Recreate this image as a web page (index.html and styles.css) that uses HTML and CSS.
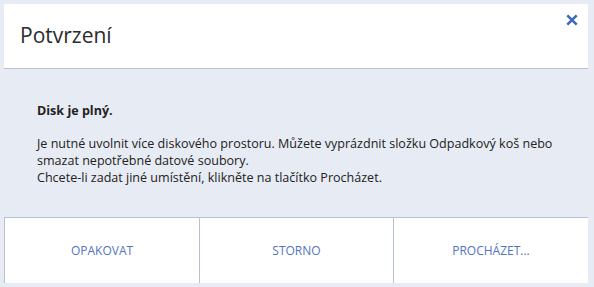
FILE: index.html
```html
<!DOCTYPE html>
<html lang="cs">
<head>
<meta charset="utf-8">
<link rel="stylesheet" href="styles.css">
</head>
<body>
<div class="dialog">
  <header class="head">
    <h1 class="title">Potvrzení</h1>
    <button class="close" aria-label="Zavřít">
      <svg width="12" height="12" viewBox="0 0 12 12"><path d="M1.3 1.3 L10.7 10.7 M10.7 1.3 L1.3 10.7" stroke="#3d6cb4" stroke-width="2.6" stroke-linecap="butt"/></svg>
    </button>
  </header>
  <main class="body">
    <p class="lead">Disk je plný.</p>
    <p class="msg">Je nutné uvolnit více diskového prostoru. Můžete vyprázdnit složku Odpadkový koš nebo smazat nepotřebné datové soubory.<br>Chcete-li zadat jiné umístění, klikněte na tlačítko Procházet.</p>
  </main>
  <footer class="actions">
    <button class="btn">OPAKOVAT</button>
    <button class="btn">STORNO</button>
    <button class="btn">PROCHÁZET...</button>
  </footer>
</div>
</body>
</html>
```
FILE: styles.css
```css
html, body {
  margin: 0;
  padding: 0;
  background: #e7ebf3;
}
body {
  font-family: "Open Sans", "Noto Sans", sans-serif;
  color: #222;
}
.dialog {
  width: 584px;
  height: 279px;
  padding: 4px;
  display: flex;
  flex-direction: column;
}
.head {
  background: #fff;
  height: 64px;
  border-bottom: 1px solid #bcc0c8;
  display: flex;
  align-items: flex-start;
  justify-content: space-between;
}
.title {
  margin: 17px 0 0 16px;
  font-weight: 400;
  font-size: 21px;
  line-height: 28px;
  color: #2b2b2b;
}
.close {
  margin: 10px 10px 0 0;
  padding: 0;
  border: 0;
  background: none;
  width: 12px;
  height: 12px;
  display: flex;
}
.body {
  flex: 1;
  padding: 33px 33px 0;
  font-size: 12.55px;
}
.lead {
  margin: 0 0 16px;
  font-weight: 700;
  line-height: 17px;
}
.msg {
  margin: 0;
  line-height: 17px;
}
.actions {
  display: grid;
  grid-template-columns: 195px 194px 195px;
  height: 65px;
  border-top: 1px solid #b6c2d4;
}
.btn {
  background: #fff;
  border: 0;
  border-left: 1px solid #b6c2d4;
  font-family: inherit;
  font-size: 12px;
  color: #5274c2;
  padding: 0;
}
```
